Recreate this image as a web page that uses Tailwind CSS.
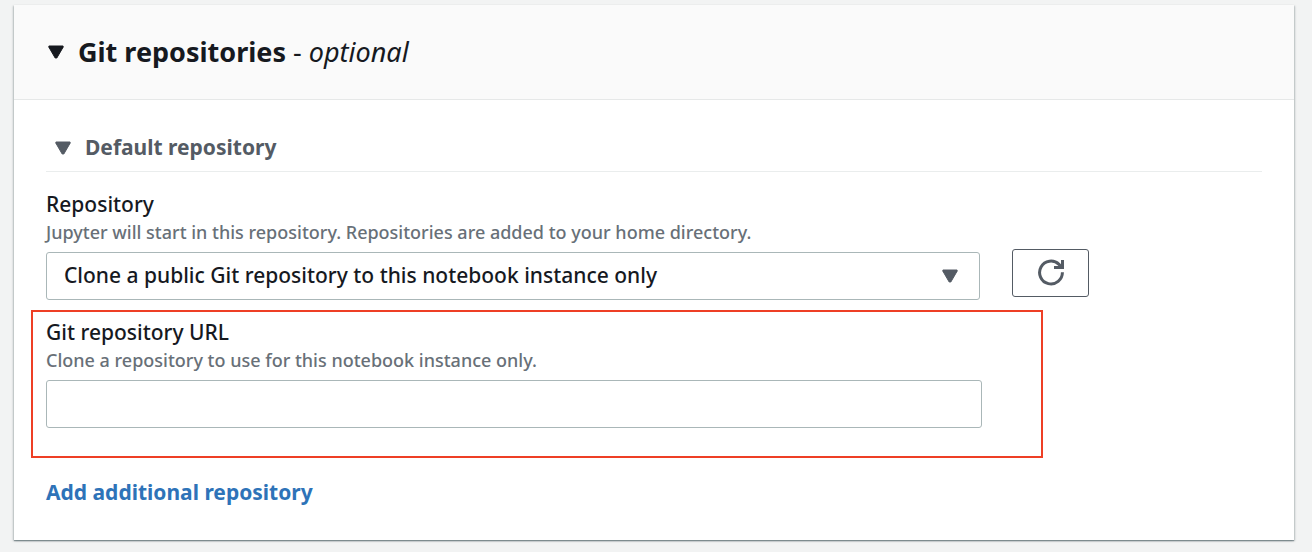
<!DOCTYPE html>
<html lang="en">
<head>
<meta charset="utf-8">
<meta name="viewport" content="width=device-width, initial-scale=1">
<title>Git repositories</title>
<script src="https://cdn.jsdelivr.net/npm/@tailwindcss/browser@4"></script>
</head>
<body class="min-h-screen bg-[#f2f3f3] pt-[5px] pr-[18px] pb-3 pl-[14px] font-['Noto_Sans',sans-serif] text-[#16191f]">
<main class="bg-white shadow-[0_1px_1px_0_rgba(0,28,36,0.3),1px_1px_2px_0_rgba(0,28,36,0.2),-1px_1px_2px_0_rgba(0,28,36,0.2)]">
  <h2 class="border-b border-[#e6e8e8] bg-[#fafafa]">
    <button type="button" aria-expanded="true" class="flex h-[94px] w-full items-center gap-[14px] px-[34px] text-left text-[27px]">
      <svg class="h-[14px] w-4 shrink-0" viewBox="0 0 16 14" fill="currentColor" stroke="currentColor" stroke-width="1" stroke-linejoin="round" aria-hidden="true"><path d="M.9 1h14.2v1.2L8.8 13H7.200L.9 2.200z"/></svg>
      <span><b class="font-bold">Git repositories</b> - <i>optional</i></span>
    </button>
  </h2>
  <div class="px-8 pt-6 pb-[34px]">
    <h3 class="border-b border-[#eaeded] text-[#545b64]">
      <button type="button" aria-expanded="true" class="flex h-[47px] w-full items-center gap-[14px] px-[9px] text-left text-[21px] font-bold">
        <svg class="h-[14px] w-4 shrink-0" viewBox="0 0 16 14" fill="currentColor" stroke="currentColor" stroke-width="1" stroke-linejoin="round" aria-hidden="true"><path d="M.9 1h14.2v1.2L8.8 13H7.200L.9 2.200z"/></svg>
        Default repository
      </button>
    </h3>
    <div class="mt-[18px] flex items-end gap-8">
      <div class="w-[calc(77%-2px)]">
        <label for="repo" class="block text-[21px] leading-7 font-medium">Repository</label>
        <p id="repo-help" class="text-[18px] leading-7 font-medium text-[#687078]">Jupyter will start in this repository. Repositories are added to your home directory.</p>
        <div class="relative mt-[6px]">
          <select id="repo" aria-describedby="repo-help" class="block h-12 w-full appearance-none rounded-[3px] border border-[#aab7b8] bg-white pr-12 pl-[17px] text-[21px] font-medium">
            <option>Clone a public Git repository to this notebook instance only</option>
          </select>
          <svg class="pointer-events-none absolute top-[17px] right-[22px] h-[14px] w-4 text-[#545b64]" viewBox="0 0 16 14" fill="currentColor" stroke="currentColor" stroke-width="1" stroke-linejoin="round" aria-hidden="true"><path d="M.9 1h14.2v1.2L8.8 13H7.200L.9 2.200z"/></svg>
        </div>
      </div>
      <button type="button" aria-label="Refresh repositories" class="mb-[3px] flex h-12 w-[77px] items-center justify-center rounded-[3px] border border-[#545b64] bg-white text-[#545b64]">
        <svg class="h-7 w-7" viewBox="0 0 28 28" fill="none" stroke="currentColor" stroke-width="3" aria-hidden="true"><path d="M25.400 13.200A11.400 11.400 0 1 1 22 5.400L25 8.500M25.500 1v7.500H17"/></svg>
      </button>
    </div>
    <div class="mt-[10px] -ml-[15px] w-[calc(77%+76px)] border-2 border-[#ee3f25] pt-[6px] pr-[59px] pb-7 pl-[13px]">
      <label for="url" class="block text-[21px] leading-7 font-medium">Git repository URL</label>
      <p id="url-help" class="text-[18px] leading-7 font-medium text-[#687078]">Clone a repository to use for this notebook instance only.</p>
      <input id="url" type="text" aria-describedby="url-help" class="mt-[6px] block h-12 w-full rounded-[3px] border border-[#aab7b8] bg-white px-[17px] text-[21px]">
    </div>
    <a href="#" class="mt-5 block w-fit text-[21px] leading-7 font-bold text-[#2e73b8]">Add additional repository</a>
  </div>
</main>
</body>
</html>
